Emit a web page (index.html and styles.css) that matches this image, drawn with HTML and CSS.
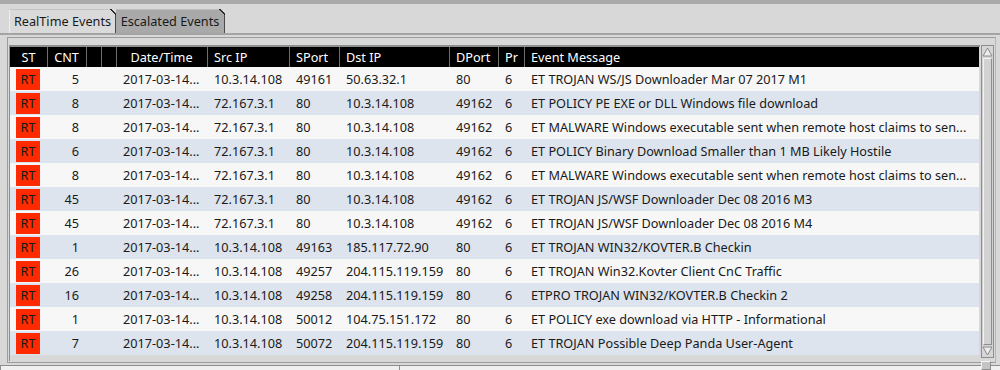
FILE: index.html
```html
<!DOCTYPE html>
<html>
<head>
<meta charset="utf-8">
<link rel="stylesheet" href="styles.css">
</head>
<body>
<div class="topbar"></div>
<div class="tabs">
  <div class="tab active">RealTime Events</div>
  <div class="tab">Escalated Events</div>
</div>
<div class="tabline"></div>

<div class="panel">
  <div class="grid">
    <table class="events">
      <colgroup>
        <col class="w-st"><col class="w-cnt"><col class="w-x"><col class="w-x">
        <col class="w-date"><col class="w-src"><col class="w-sport"><col class="w-dst">
        <col class="w-dport"><col class="w-pr"><col class="w-msg">
      </colgroup>
      <thead>
        <tr>
          <th class="c first">ST</th>
          <th class="c">CNT</th>
          <th></th>
          <th></th>
          <th class="c">Date/Time</th>
          <th>Src IP</th>
          <th>SPort</th>
          <th>Dst IP</th>
          <th>DPort</th>
          <th>Pr</th>
          <th>Event Message</th>
        </tr>
      </thead>
      <tbody>
        <tr><td class="st"><span class="rt">RT</span></td><td class="num">5</td><td></td><td></td><td>2017-03-14...</td><td>10.3.14.108</td><td>49161</td><td>50.63.32.1</td><td>80</td><td>6</td><td>ET TROJAN WS/JS Downloader Mar 07 2017 M1</td></tr>
        <tr><td class="st"><span class="rt">RT</span></td><td class="num">8</td><td></td><td></td><td>2017-03-14...</td><td>72.167.3.1</td><td>80</td><td>10.3.14.108</td><td>49162</td><td>6</td><td>ET POLICY PE EXE or DLL Windows file download</td></tr>
        <tr><td class="st"><span class="rt">RT</span></td><td class="num">8</td><td></td><td></td><td>2017-03-14...</td><td>72.167.3.1</td><td>80</td><td>10.3.14.108</td><td>49162</td><td>6</td><td>ET MALWARE Windows executable sent when remote host claims to sen...</td></tr>
        <tr><td class="st"><span class="rt">RT</span></td><td class="num">6</td><td></td><td></td><td>2017-03-14...</td><td>72.167.3.1</td><td>80</td><td>10.3.14.108</td><td>49162</td><td>6</td><td>ET POLICY Binary Download Smaller than 1 MB Likely Hostile</td></tr>
        <tr><td class="st"><span class="rt">RT</span></td><td class="num">8</td><td></td><td></td><td>2017-03-14...</td><td>72.167.3.1</td><td>80</td><td>10.3.14.108</td><td>49162</td><td>6</td><td>ET MALWARE Windows executable sent when remote host claims to sen...</td></tr>
        <tr><td class="st"><span class="rt">RT</span></td><td class="num">45</td><td></td><td></td><td>2017-03-14...</td><td>72.167.3.1</td><td>80</td><td>10.3.14.108</td><td>49162</td><td>6</td><td>ET TROJAN JS/WSF Downloader Dec 08 2016 M3</td></tr>
        <tr><td class="st"><span class="rt">RT</span></td><td class="num">45</td><td></td><td></td><td>2017-03-14...</td><td>72.167.3.1</td><td>80</td><td>10.3.14.108</td><td>49162</td><td>6</td><td>ET TROJAN JS/WSF Downloader Dec 08 2016 M4</td></tr>
        <tr><td class="st"><span class="rt">RT</span></td><td class="num">1</td><td></td><td></td><td>2017-03-14...</td><td>10.3.14.108</td><td>49163</td><td>185.117.72.90</td><td>80</td><td>6</td><td>ET TROJAN WIN32/KOVTER.B Checkin</td></tr>
        <tr><td class="st"><span class="rt">RT</span></td><td class="num">26</td><td></td><td></td><td>2017-03-14...</td><td>10.3.14.108</td><td>49257</td><td>204.115.119.159</td><td>80</td><td>6</td><td>ET TROJAN Win32.Kovter Client CnC Traffic</td></tr>
        <tr><td class="st"><span class="rt">RT</span></td><td class="num">16</td><td></td><td></td><td>2017-03-14...</td><td>10.3.14.108</td><td>49258</td><td>204.115.119.159</td><td>80</td><td>6</td><td>ETPRO TROJAN WIN32/KOVTER.B Checkin 2</td></tr>
        <tr><td class="st"><span class="rt">RT</span></td><td class="num">1</td><td></td><td></td><td>2017-03-14...</td><td>10.3.14.108</td><td>50012</td><td>104.75.151.172</td><td>80</td><td>6</td><td>ET POLICY exe download via HTTP - Informational</td></tr>
        <tr><td class="st"><span class="rt">RT</span></td><td class="num">7</td><td></td><td></td><td>2017-03-14...</td><td>10.3.14.108</td><td>50072</td><td>204.115.119.159</td><td>80</td><td>6</td><td>ET TROJAN Possible Deep Panda User-Agent</td></tr>
      </tbody>
    </table>
  </div>

  <div class="scroll">
    <div class="sbtn">
      <svg width="11" height="10" viewBox="0 0 11 10"><polygon points="5.5,1 10,9 1,9" fill="#ececec" stroke="#8a8a8a" stroke-width="1"/></svg>
    </div>
    <div class="track"></div>
    <div class="sbtn">
      <svg width="11" height="10" viewBox="0 0 11 10"><polygon points="1,1 10,1 5.5,9" fill="#ececec" stroke="#8a8a8a" stroke-width="1"/></svg>
    </div>
  </div>
</div>

<div class="status">
  <div class="field first"></div>
  <div class="field"></div>
  <div class="grip"></div>
</div>
</body>
</html>
```

FILE: styles.css
```css
* {
  margin: 0px;
  padding: 0px;
  box-sizing: border-box;
}
body {
  width: 1000px;
  height: 370px;
  overflow: hidden;
  background: #d8d8d8;
  font-family: "Noto Sans", "Open Sans", sans-serif;
  font-size: 12.7px;
  color: #1a1a1a;
  position: relative;
}
.topbar {
  height: 4px;
  background: #a9a9a9;
}
.tabs {
  display: flex;
  padding: 5px 0 0 9px;
  height: 29px;
}
.tab {
  position: relative;
  height: 24px;
  line-height: 23px;
  text-align: center;
  border-top: 1px solid #c4c4c4;
  border-left: 1px solid #eeeeee;
  border-right: 1px solid #4a4a4a;
}
.tab:first-child {
  width: 107px;
  background: #dadada;
}
.tab:last-child {
  width: 109px;
  background: #a9a9a9;
  border-left: none;
  border-top-color: #bdbdbd;
}
.tab::after {
  content: "";
  position: absolute;
  top: -1px;
  right: -1px;
  width: 6px;
  height: 6px;
  background: linear-gradient(to top right, transparent 42%, #2a2a2a 42%, #2a2a2a 62%, #d8d8d8 62%);
}
.tabline {
  height: 2px;
  background: #a4a4a4;
}
.panel {
  display: flex;
  align-items: flex-start;
  gap: 1px;
  margin: 2px 0 0 7px;
  width: 989px;
  height: 326px;
  border: 1px solid #9c9c9c;
  border-right-color: #b8b8b8;
  padding: 7px 1px 0 1px;
}
.grid {
  width: 971px;
  height: 316px;
  border-top: 2px solid #8e8e8e;
  border-left: 1px solid #8e8e8e;
  background: #d8d8d8;
  overflow: hidden;
}
.events {
  table-layout: fixed;
  width: 969px;
  border-collapse: separate;
  border-spacing: 0;
}
.w-st { width: 37px; }
.w-cnt { width: 39px; }
.w-x { width: 15px; }
.w-date { width: 91px; }
.w-src { width: 82px; }
.w-sport { width: 50px; }
.w-dst { width: 110px; }
.w-dport { width: 49px; }
.w-pr { width: 26px; }
.w-msg { width: 455px; }

.events th {
  height: 20px;
  background: #000;
  color: #fff;
  font-weight: normal;
  text-align: left;
  padding: 0 0 0 7px;
  white-space: nowrap;
  overflow: hidden;
  box-shadow: inset 1px 0 0 #6e6e6e;
}
.events th.first {
  box-shadow: none;
}
.events th.c {
  text-align: center;
  padding: 0;
}
.events td {
  height: 24px;
  padding: 0 0 0 7px;
  white-space: nowrap;
  overflow: hidden;
  background: #f7f7f7;
}
.events tr:nth-child(even) td {
  background: #dde4ee;
}
.events td.num {
  text-align: right;
  padding: 0 7px 0 0;
}
.events td.st {
  vertical-align: top;
  padding: 2px 0 0 6px;
}
.rt {
  display: block;
  width: 24px;
  height: 21px;
  line-height: 21px;
  text-align: center;
  background: #ff2a00;
  color: #1a1a1a;
}
.scroll {
  width: 13px;
  height: 313px;
  display: flex;
  flex-direction: column;
  border: 1px solid #8e8e8e;
  background: #d0d0d0;
}
.sbtn {
  height: 12px;
  display: flex;
  align-items: center;
  justify-content: center;
  background: #d6d6d6;
}
.track {
  flex: 1;
  margin: 0 1px;
  border-left: 1px solid #f2f2f2;
  border-right: 1px solid #8e8e8e;
  border-top: 1px solid #f2f2f2;
  border-bottom: 1px solid #8e8e8e;
  background: #d2d2d2;
}
.status {
  display: flex;
  margin-top: 2px;
  height: 6px;
  border-top: 1px solid #8e8e8e;
  background: #f0f0f0;
}
.field {
  flex: 1;
}
.field.first {
  flex: none;
  width: 400px;
  border-left: 1px solid #8e8e8e;
  border-right: 1px solid #8e8e8e;
}
.grip {
  position: absolute;
  left: 981px;
  top: 361px;
  width: 10px;
  height: 9px;
  background: #c4c4c4;
  border: 1px solid #8e8e8e;
  border-top-color: #f4f4f4;
  border-left-color: #f4f4f4;
}
```
